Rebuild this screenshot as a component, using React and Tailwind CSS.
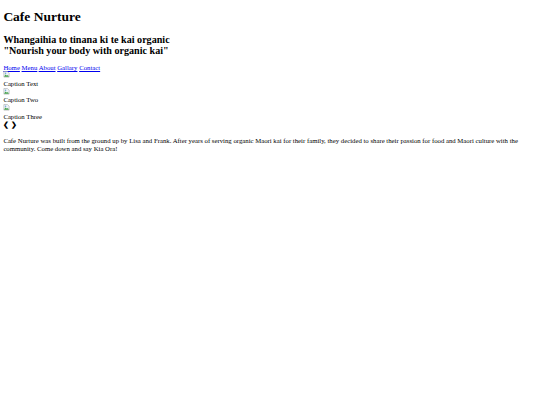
const slides = ['Caption Text', 'Caption Two', 'Caption Three'];

function BrokenImage() {
  return (
    <svg width="7" height="7" viewBox="0 0 16 16" className="inline-block align-baseline">
      <path d="M2 1h8l4 4v9H2z" fill="#eef3f8" stroke="#a0a0a0" strokeWidth="1.2" />
      <path d="M3 12l3-4 3 3 2-2 2 3v1H3z" fill="#43a047" />
      <circle cx="6" cy="5" r="1.6" fill="#64a0d8" />
    </svg>
  );
}

export default function App() {
  return (
    <div className="min-h-[405px] bg-white px-[3.375px] font-['Liberation_Serif',serif] text-[6.75px] leading-[1.15] text-black">
      <h1 className="my-[9.05px] text-[13.5px] font-bold">Cafe Nurture</h1>
      <h2 className="mt-[8.4px] mb-[7.4px] text-[10.125px] font-bold">
        Whangaihia to tinana ki te kai organic
        <br />
        "Nourish your body with organic kai"
      </h2>
      <nav className="-mb-[1px]">
        {['Home', 'Menu', 'About', 'Gallary', 'Contact'].map((item) => (
          <span key={item}>
            <a href="#" className="text-[#0000ee] underline">
              {item}
            </a>{' '}
          </span>
        ))}
      </nav>
      <div>
        {slides.map((caption) => (
          <div key={caption}>
            <BrokenImage />
            <div>{caption}</div>
          </div>
        ))}
        <span className="font-bold">&#10094;</span> <span className="font-bold">&#10095;</span>
      </div>
      <p className="mt-[8.5px] mb-[6.75px]">
        Cafe Nurture was built from the ground up by Lisa and Frank. After years of serving organic Maori kai for
        their family, they decided to share their passion for food and Maori culture with the community. Come down
        and say Kia Ora!
      </p>
    </div>
  );
}
